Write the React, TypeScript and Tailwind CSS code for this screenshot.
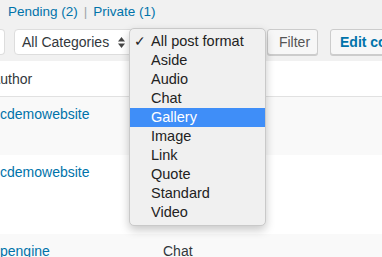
const formats = [
  "All post format",
  "Aside",
  "Audio",
  "Chat",
  "Gallery",
  "Image",
  "Link",
  "Quote",
  "Standard",
  "Video",
];

export default function App() {
  return (
    <div
      className="relative w-[382px] h-[257px] overflow-hidden bg-[#f1f1f1] text-[#32373c]"
      style={{ fontFamily: '"Liberation Sans", Arial, sans-serif' }}
    >
      {/* status links */}
      <div className="h-[28px] flex items-center pl-[8px] pb-[4px] text-[13.5px] leading-[16px] whitespace-nowrap">
        <a className="text-[#0073aa]">Pending (2)</a>
        <span className="mx-[6px] text-[#a0a5aa]">|</span>
        <a className="text-[#0073aa]">Private (1)</a>
      </div>

      {/* filters */}
      <div className="flex h-[26px] mt-[1px] whitespace-nowrap">
        <div className="shrink-0 w-[5px] h-full bg-white border border-l-0 border-[#ddd] rounded-r-[4px]" />
        <div className="shrink-0 ml-[9px] w-[122px] h-full bg-white border border-[#ddd] rounded-[4px] flex items-center pl-[7px] text-[14px]">
          <span>All Categories</span>
          <svg className="ml-[9px]" width="7" height="11" viewBox="0 0 7 11">
            <path d="M3.5 0 L7 4.5 L0 4.5 Z" fill="#444" />
            <path d="M3.5 11 L7 6.5 L0 6.5 Z" fill="#444" />
          </svg>
        </div>
        <div className="shrink-0 ml-[4px] w-[123px] h-full bg-white border border-[#ddd] rounded-[4px]" />
        <button className="shrink-0 ml-[4px] w-[51px] h-full bg-[#f7f7f7] border border-[#ccc] rounded-[3px] shadow-[0_1px_0_#ccc] text-[14px] text-[#555] pl-[4px]">
          Filter
        </button>
        <button className="shrink-0 ml-[12px] w-[90px] h-full bg-[#f7f7f7] border border-[#ccc] rounded-[3px] shadow-[0_1px_0_#ccc] text-[14px] font-bold text-[#0073aa] text-left pl-[9px] overflow-hidden">
          Edit columns
        </button>
      </div>

      {/* table */}
      <div className="mt-[6px] text-[14px] leading-[18px] whitespace-nowrap">
        <div className="h-[36px] bg-white border-b border-[#e1e1e1] pt-[9px]">
          <span className="ml-[-9px]">Author</span>
        </div>
        <div className="h-[58px] bg-[#f9f9f9] pt-[8px]">
          <a className="text-[#0073aa]">cdemowebsite</a>
        </div>
        <div className="h-[79px] bg-white pt-[8px]">
          <a className="text-[#0073aa]">cdemowebsite</a>
        </div>
        <div className="h-[40px] bg-[#f9f9f9] pt-[8px] flex">
          <a className="shrink-0 w-[163px] text-[#0073aa]">pengine</a>
          <span>Chat</span>
        </div>
      </div>

      {/* open post format menu */}
      <div className="absolute left-[129px] top-[28px] w-[137px] h-[198px] bg-[#f0f0f0] border border-[#c9c9c9] rounded-[5px] shadow-[0_4px_10px_rgba(0,0,0,0.22)] py-[3px] text-[14.5px] leading-[19px] text-[#222] whitespace-nowrap">
        {formats.map((f, i) => (
          <div
            key={f}
            className={
              "relative h-[19px] pl-[21px] " +
              (f === "Gallery" ? "bg-[#3f8ef8] text-white" : "")
            }
          >
            {i === 0 && (
              <span className="absolute left-[4px] top-0 text-[14px]">✓</span>
            )}
            {f}
          </div>
        ))}
      </div>
    </div>
  );
}
